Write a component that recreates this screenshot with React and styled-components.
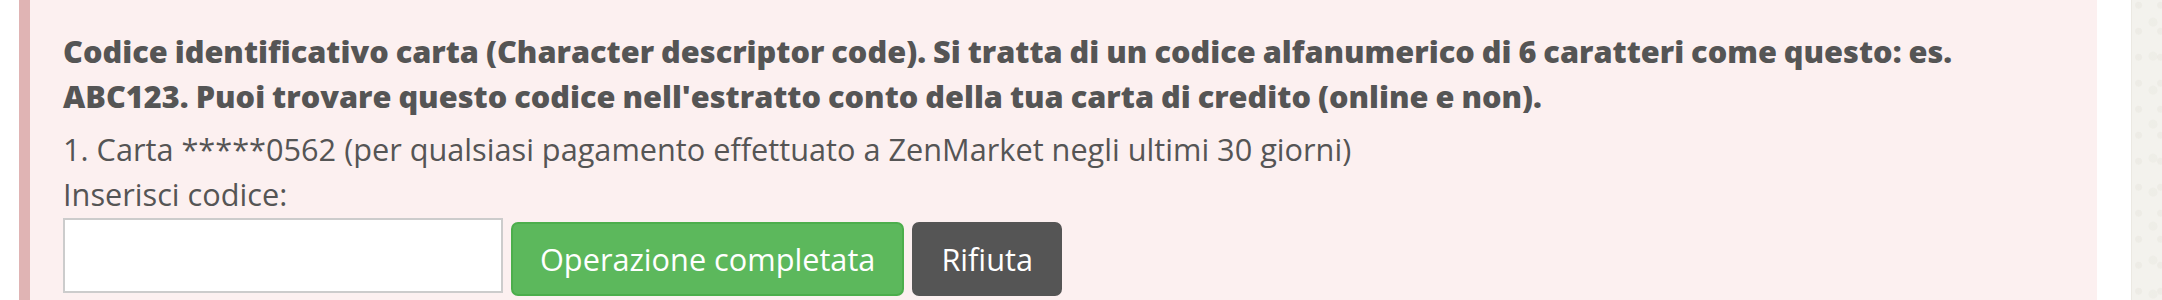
import React from "react"
import styled, { createGlobalStyle } from "styled-components"

const GlobalStyle = createGlobalStyle`
  html, body {
    margin: 0;
    padding: 0;
    background: #ffffff;
  }
  body {
    font-family: "Open Sans", "Liberation Sans", Arial, sans-serif;
    color: #555555;
  }
`

const Page = styled.div`
  display: grid;
  grid-template-columns: 19px 2078px 34px 1fr;
  height: 300px;
  overflow: hidden;
`

const Gutter = styled.div`
  background: #ffffff;
`

const Sidebar = styled.div`
  background-color: #f3f2ed;
  background-image:
    radial-gradient(circle at 30% 20%, rgba(220, 218, 206, 0.25) 0 3px, transparent 4px),
    radial-gradient(circle at 70% 65%, rgba(220, 218, 206, 0.2) 0 4px, transparent 5px);
  background-size: 22px 26px, 30px 34px;
  border-left: 1px solid #ebe9e2;
`

const Alert = styled.div`
  background: #fcf0f0;
  border-left: 11px solid #e0b4b4;
  padding: 29px 33px 0 33px;
  font-size: 30.7px;
  line-height: 45px;
`

const Lead = styled.p`
  margin: 0 0 8px 0;
  font-weight: 800;
  word-spacing: -1px;
`

const Line = styled.div`
  font-weight: 400;
`

const Form = styled.div`
  display: flex;
  align-items: flex-start;
  gap: 8px;
  margin-top: 1px;
`

const CodeInput = styled.input`
  box-sizing: border-box;
  width: 440px;
  height: 75px;
  border: 2px solid #cccccc;
  background: #ffffff;
  font-family: inherit;
  font-size: 30.7px;
  padding: 0 16px;
  outline: none;
`

const Button = styled.button`
  box-sizing: border-box;
  height: 74px;
  margin-top: 4px;
  padding: 0 27px;
  border-radius: 7px;
  border: 2px solid ${(p) => (p.$variant === "success" ? "#4cae4c" : "#555555")};
  background: ${(p) => (p.$variant === "success" ? "#5cb85c" : "#555555")};
  color: #ffffff;
  font-family: inherit;
  font-size: 30.7px;
  line-height: 45px;
  cursor: pointer;
`

export default function App() {
  return (
    <>
      <GlobalStyle />
      <Page>
        <Gutter />
        <Alert>
          <Lead>
            Codice identificativo carta (Character descriptor code). Si tratta di un codice
            alfanumerico di 6 caratteri come questo: es. ABC123. Puoi trovare questo codice
            nell'estratto conto della tua carta di credito (online e non).
          </Lead>
          <Line>
            1. Carta *****0562 (per qualsiasi pagamento effettuato a ZenMarket negli ultimi 30
            giorni)
          </Line>
          <Line>Inserisci codice:</Line>
          <Form>
            <CodeInput type="text" />
            <Button $variant="success">Operazione completata</Button>
            <Button $variant="default">Rifiuta</Button>
          </Form>
        </Alert>
        <Gutter />
        <Sidebar />
      </Page>
    </>
  )
}
